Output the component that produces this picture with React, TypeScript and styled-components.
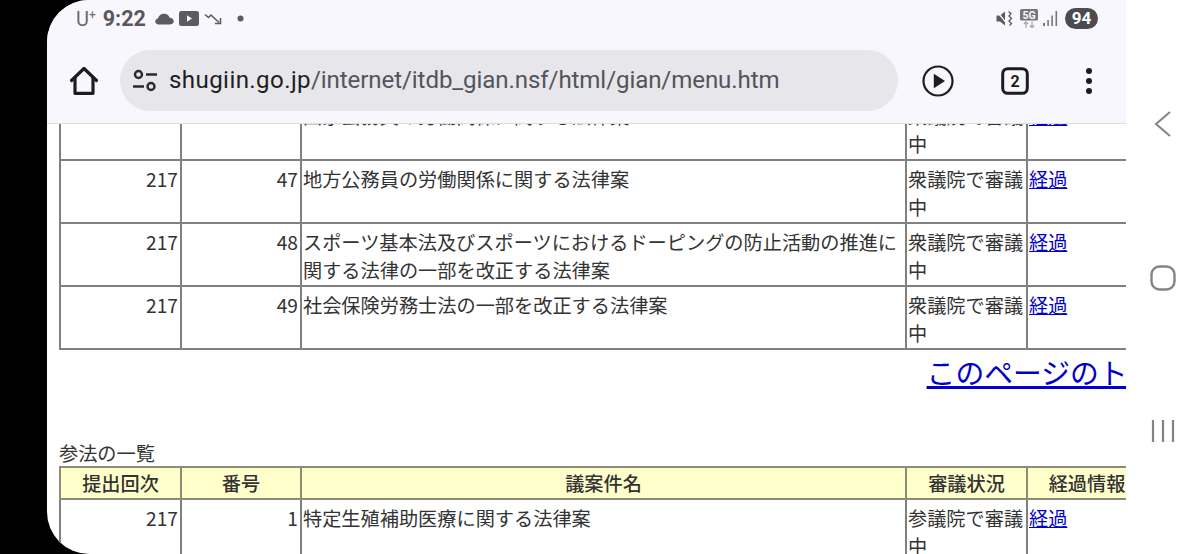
import React from "react";
import styled, { createGlobalStyle } from "styled-components";

const Global = createGlobalStyle`
  html, body { margin: 0; padding: 0; background: #000; }
  body { font-family: "Noto Sans CJK JP", "Noto Sans", sans-serif; }
`;

const Device = styled.div`
  width: 1200px;
  height: 554px;
  display: flex;
  padding-left: 47px;
  box-sizing: border-box;
  background: #000;
  overflow: hidden;
`;

const Screen = styled.div`
  width: 1079px;
  height: 554px;
  flex: none;
  background: #fff;
  border-radius: 42px 0 0 42px;
  overflow: hidden;
  display: flex;
  flex-direction: column;
`;

const NavBar = styled.nav`
  width: 74px;
  flex: none;
  background: #fff;
  display: flex;
  flex-direction: column;
  align-items: center;
  justify-content: center;
  gap: 128px;
  box-sizing: border-box;
  color: #848484;
`;

const Chrome = styled.header`
  flex: none;
  height: 124px;
  box-sizing: border-box;
  background: #f9f7fe;
  border-bottom: 1px solid #dedde2;
  display: flex;
  flex-direction: column;
`;

const StatusBar = styled.div`
  height: 37px;
  flex: none;
  box-sizing: border-box;
  padding: 0 28px 0 29px;
  display: flex;
  align-items: center;
  justify-content: space-between;
  color: #5c5c60;
`;

const StatusGroup = styled.div`
  display: flex;
  align-items: center;
`;

const Carrier = styled.span`
  font: 400 20px/1 Roboto, sans-serif;
  color: #6a6a6e;
  margin-right: 7px;
  sup {
    font-size: 12px;
    line-height: 0;
    vertical-align: 7px;
  }
`;

const Clock = styled.span`
  font: 700 21.5px/1 Roboto, sans-serif;
  color: #58585c;
  margin-right: 9px;
`;

const Battery = styled.span`
  width: 33px;
  height: 21px;
  margin-left: 7px;
  border-radius: 11px;
  background: #4b4b50;
  color: #fff;
  font: 700 17px/21px Roboto, sans-serif;
  text-align: center;
`;

const Toolbar = styled.div`
  flex: 1;
  box-sizing: border-box;
  display: flex;
  align-items: flex-start;
  padding: 13px 0 0 0;
`;

const HomeButton = styled.div`
  width: 73px;
  height: 61px;
  flex: none;
  display: flex;
  align-items: center;
  justify-content: center;
  color: #1d1d20;
`;

const Omnibox = styled.div`
  width: 778px;
  height: 61px;
  flex: none;
  box-sizing: border-box;
  padding-left: 12px;
  border-radius: 31px;
  background: #e7e6eb;
  display: flex;
  align-items: center;
  gap: 11px;
`;

const Url = styled.div`
  font: 400 24.1px/1 Roboto, sans-serif;
  letter-spacing: -0.1px;
  color: #54545a;
  white-space: nowrap;
  b {
    font-weight: 400;
    letter-spacing: 0.4px;
    color: #1e1e22;
  }
`;

const ToolIcons = styled.div`
  flex: 1;
  height: 61px;
  display: flex;
  align-items: center;
  color: #1d1d20;
`;

const ToolSlot = styled.div<{ $w: number }>`
  width: ${(p) => p.$w}px;
  flex: none;
  display: flex;
  justify-content: center;
`;

const Page = styled.main`
  flex: 1;
  min-height: 0;
  overflow: hidden;
  width: 1167px;
  box-sizing: border-box;
  padding-left: 12px;
  color: #333;
  font-size: 19.2px;
`;

const BillTable = styled.table`
  table-layout: fixed;
  width: 1087px;
  border-collapse: collapse;
  font-size: 19.2px;
  line-height: 28.6px;
  color: #333;
`;

const ClippedTable = styled(BillTable)`
  margin-top: -28px;
`;

const Th = styled.th`
  height: 32px;
  padding: 0;
  box-sizing: border-box;
  background: #ffffcc;
  border: 2px solid #8c8c78;
  font-weight: 500;
  font-size: 19.2px;
  line-height: 28px;
  text-align: center;
  color: #333;
`;

const Td = styled.td<{ $num?: boolean }>`
  height: 62px;
  box-sizing: border-box;
  padding: 3.8px ${(p) => (p.$num ? "2px" : "0")} 0 1px;
  border: 2px solid #808080;
  vertical-align: top;
  text-align: ${(p) => (p.$num ? "right" : "left")};
`;

const Link = styled.a`
  color: #0000cc;
  text-decoration: underline;
`;

const TopLink = styled.div`
  font-size: 28.8px;
  line-height: 40px;
  text-align: right;
  margin-top: 2px;
  white-space: nowrap;
  a {
    text-decoration-thickness: 3px;
  }
`;

const Caption = styled.div`
  font-size: 19.2px;
  line-height: 29px;
  margin-top: 47px;
  margin-bottom: -2px;
`;

const Cols = () => (
  <colgroup>
    <col style={{ width: 121 }} />
    <col style={{ width: 120 }} />
    <col style={{ width: 605 }} />
    <col style={{ width: 121 }} />
    <col style={{ width: 120 }} />
  </colgroup>
);

const rows = [
  { no: 46, title: "国家公務員の労働関係に関する法律案" },
  { no: 47, title: "地方公務員の労働関係に関する法律案" },
  { no: 48, title: "スポーツ基本法及びスポーツにおけるドーピングの防止活動の推進に関する法律の一部を改正する法律案" },
  { no: 49, title: "社会保険労務士法の一部を改正する法律案" },
];

const Row = ({ no, title, status }: { no: number; title: string; status: string }) => (
  <tr>
    <Td $num>217</Td>
    <Td $num>{no}</Td>
    <Td>{title}</Td>
    <Td>{status}</Td>
    <Td><Link href="#">経過</Link></Td>
  </tr>
);

const Cloud = () => (
  <svg width="19" height="12" viewBox="0 0 21 13" fill="currentColor" style={{ marginRight: 5 }}>
    <path d="M4 12.500C1.800 12.500.3 11 .3 9.200c0-1.700 1.300-3 3-3.200C4 3 6.800.8 10 .8c3 0 5.300 1.800 6.200 4.400 2.500.2 4.500 1.700 4.500 3.900 0 2-1.600 3.400-3.800 3.400z" />
  </svg>
);

const Video = () => (
  <svg width="20" height="15" viewBox="0 0 20 15" style={{ marginRight: 5 }}>
    <rect x="0" y="0" width="20" height="15" rx="2.500" fill="currentColor" />
    <path d="M8 4.300v6.400l5-3.200z" fill="#f9f7fe" />
  </svg>
);

const TrendDown = () => (
  <svg width="18" height="13" viewBox="0 0 18 13" fill="none" stroke="currentColor" strokeWidth="1.600" style={{ marginRight: 15 }}>
    <path d="M1 2.500l3.500 3 2.500-2.500 8 7.500" />
    <path d="M16.500 6v5.500H11" />
  </svg>
);

const Dot = () => (
  <svg width="7" height="7" viewBox="0 0 7 7"><circle cx="3.500" cy="3.500" r="3" fill="currentColor" /></svg>
);

const Mute = () => (
  <svg width="17" height="17" viewBox="0 0 17 17" style={{ marginRight: 7 }}>
    <path d="M.5 5.500h3.500L9 1.500v14l-5-4H.5z" fill="currentColor" />
    <path d="M1 1.500l11 13.500" stroke="#f9f7fe" strokeWidth="1.200" />
    <path d="M12.500 1.500l2.500 2-2 2.500 2.500 2.500-2.500 2.500 2.500 2.500-2 2" fill="none" stroke="currentColor" strokeWidth="1.300" />
  </svg>
);

const FiveG = () => (
  <svg width="18" height="19" viewBox="0 0 18 19" style={{ marginRight: 5 }}>
    <rect x="0" y="0" width="18" height="11.500" rx="1.500" fill="#77777b" />
    <text x="9" y="9.800" textAnchor="middle" fontSize="10.500" fontWeight="700" fontFamily="Roboto, sans-serif" fill="#f9f7fe">5G</text>
    <path d="M6 19v-6M3.800 15l2.200-2.200L8.200 15M12 12.500v6M9.800 16.500l2.200 2.200 2.200-2.200" fill="none" stroke="#a5a5a9" strokeWidth="1.200" />
  </svg>
);

const Signal = () => (
  <svg width="15" height="15" viewBox="0 0 15 15" fill="#77777b">
    <rect x="0" y="12" width="2" height="3" />
    <rect x="4.300" y="9" width="1.600" height="6" />
    <rect x="8.300" y="4.500" width="1.600" height="10.500" />
    <rect x="12.500" y="0" width="1.600" height="15" />
  </svg>
);

const Home = () => (
  <svg width="30" height="30" viewBox="0 0 30 30" fill="none" stroke="currentColor" strokeWidth="3.200" strokeLinejoin="round" strokeLinecap="round">
    <path d="M2.500 14.500L15 2.500l12.500 12" />
    <path d="M6 11.500V27.300h18V11.500" />
  </svg>
);

const Tune = () => (
  <svg width="26" height="24" viewBox="0 0 26 24" fill="none" stroke="#2a2a2e" strokeWidth="2.400">
    <circle cx="6.500" cy="5.500" r="3.500" />
    <path d="M14 5.500h11" />
    <circle cx="19" cy="17.500" r="3.500" />
    <path d="M1 17.500h11" />
  </svg>
);

const Play = () => (
  <svg width="32" height="32" viewBox="0 0 32 32">
    <circle cx="16" cy="16" r="14.500" fill="none" stroke="currentColor" strokeWidth="2.200" />
    <path d="M11.800 8.800v14.400L23 16z" fill="currentColor" />
  </svg>
);

const Tabs = () => (
  <svg width="28" height="28" viewBox="0 0 28 28">
    <rect x="1.700" y="1.700" width="24.600" height="24.600" rx="5" fill="none" stroke="currentColor" strokeWidth="3" />
    <text x="14" y="20" textAnchor="middle" fontSize="16" fontWeight="700" fontFamily="Roboto, sans-serif" fill="currentColor">2</text>
  </svg>
);

const Dots = () => (
  <svg width="8" height="28" viewBox="0 0 8 28" fill="currentColor">
    <circle cx="4" cy="4" r="3" />
    <circle cx="4" cy="14" r="3" />
    <circle cx="4" cy="24" r="3" />
  </svg>
);

const Back = () => (
  <svg width="18" height="26" viewBox="0 0 18 26" fill="none" stroke="currentColor" strokeWidth="2">
    <path d="M16 1L2 13l14 12" />
  </svg>
);

const HomeNav = () => (
  <svg width="26" height="26" viewBox="0 0 26 26" fill="none" stroke="currentColor" strokeWidth="2.400">
    <rect x="1.500" y="1.500" width="23" height="23" rx="8" />
  </svg>
);

const Recents = () => (
  <svg width="24" height="24" viewBox="0 0 24 24" stroke="currentColor" strokeWidth="2.200">
    <path d="M2 1v22M12 1v22M22 1v22" />
  </svg>
);

export default function App() {
  return (
    <Device>
      <Global />
      <Screen>
        <Chrome>
          <StatusBar>
            <StatusGroup>
              <Carrier>U<sup>+</sup></Carrier>
              <Clock>9:22</Clock>
              <Cloud />
              <Video />
              <TrendDown />
              <Dot />
            </StatusGroup>
            <StatusGroup>
              <Mute />
              <FiveG />
              <Signal />
              <Battery>94</Battery>
            </StatusGroup>
          </StatusBar>
          <Toolbar>
            <HomeButton><Home /></HomeButton>
            <Omnibox>
              <Tune />
              <Url><b>shugiin.go.jp</b>/internet/itdb_gian.nsf/html/gian/menu.htm</Url>
            </Omnibox>
            <ToolIcons>
              <ToolSlot $w={80}><Play /></ToolSlot>
              <ToolSlot $w={74}><Tabs /></ToolSlot>
              <ToolSlot $w={74}><Dots /></ToolSlot>
            </ToolIcons>
          </Toolbar>
        </Chrome>
        <Page>
          <ClippedTable>
            <Cols />
            <tbody>
              {rows.map((r) => (
                <Row key={r.no} no={r.no} title={r.title} status="衆議院で審議中" />
              ))}
            </tbody>
          </ClippedTable>
          <TopLink><Link href="#">このページのトップへ</Link></TopLink>
          <Caption>参法の一覧</Caption>
          <BillTable>
            <Cols />
            <thead>
              <tr>
                <Th>提出回次</Th>
                <Th>番号</Th>
                <Th>議案件名</Th>
                <Th>審議状況</Th>
                <Th>経過情報</Th>
              </tr>
            </thead>
            <tbody>
              <Row no={1} title="特定生殖補助医療に関する法律案" status="参議院で審議中" />
            </tbody>
          </BillTable>
        </Page>
      </Screen>
      <NavBar>
        <Back />
        <HomeNav />
        <Recents />
      </NavBar>
    </Device>
  );
}
